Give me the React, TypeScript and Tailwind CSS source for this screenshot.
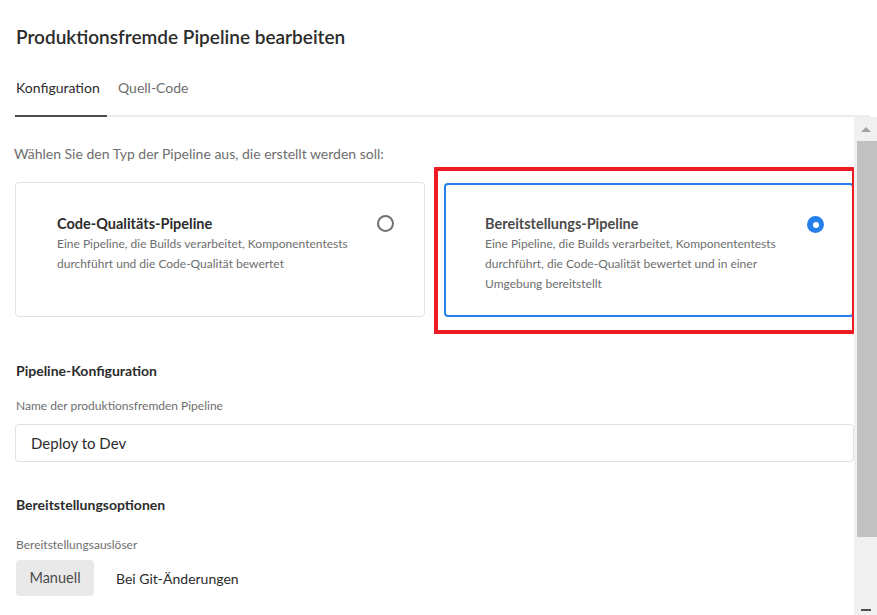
import React from "react";

const font = { fontFamily: "Lato, 'Noto Sans', sans-serif" };

function Radio({ checked }: { checked?: boolean }) {
  if (checked) {
    return (
      <div className="w-[17px] h-[17px] rounded-full bg-[#2680eb] flex items-center justify-center shrink-0">
        <div className="w-[6px] h-[6px] rounded-full bg-white" />
      </div>
    );
  }
  return <div className="w-[17px] h-[17px] rounded-full border-2 border-[#707070] bg-white shrink-0" />;
}

export default function App() {
  return (
    <div className="w-[877px] h-[615px] overflow-hidden bg-white text-[#2c2c2c] flex flex-col" style={font}>
      <div className="h-[117px] shrink-0 flex flex-col">
        <div className="pl-[16px] pt-[26px] text-[19px] leading-[22px] font-semibold text-[#2c2c2c]">
          Produktionsfremde Pipeline bearbeiten
        </div>
        <div className="mt-[17px] flex items-end pl-[15px] pr-[7px] h-[52px]">
          <div className="flex flex-1 border-b-2 border-[#ececec] h-full">
            <div className="border-b-2 border-[#4b4b4b] -mb-[2px] w-[92px] pl-[1px] pt-[13px] text-[14px] leading-[20px] text-[#2c2c2c]">
              Konfiguration
            </div>
            <div className="pl-[11px] pt-[13px] text-[14px] leading-[20px] text-[#6e6e6e]">Quell-Code</div>
          </div>
        </div>
      </div>
      <div className="flex flex-1 min-h-0">
        <div className="flex-1 min-w-0 overflow-hidden pl-[15px] pr-0">
          <div className="pt-[27px] -ml-[1px] text-[14px] leading-[20px] text-[#6e6e6e]">
            Wählen Sie den Typ der Pipeline aus, die erstellt werden soll:
          </div>
          <div className="mt-[18px] grid grid-cols-2 gap-[19px]">
            <div className="h-[135px] rounded-[4px] border border-[#e1e1e1] flex pl-[41px] pr-[30px] pt-[31px]">
              <div className="flex-1">
                <div className="text-[14.5px] leading-[20px] font-bold text-[#2c2c2c]">Code-Qualitäts-Pipeline</div>
                <div className="text-[12px] leading-[20px] text-[#6e6e6e]">
                  Eine Pipeline, die Builds verarbeitet, Komponententests durchführt und die Code-Qualität bewertet
                </div>
              </div>
              <div className="pt-[1px]">
                <Radio />
              </div>
            </div>
            <div className="relative">
              <div className="h-[134px] mt-[1px] rounded-[4px] border-2 border-[#2680eb] flex pl-[39px] pr-[28px] pt-[29px]">
                <div className="flex-1">
                  <div className="text-[14.5px] leading-[20px] font-bold text-[#4b4b4b]">Bereitstellungs-Pipeline</div>
                  <div className="text-[12px] leading-[20px] text-[#6e6e6e] pr-[20px]">
                    Eine Pipeline, die Builds verarbeitet, Komponententests durchführt, die Code-Qualität bewertet und in einer Umgebung bereitstellt
                  </div>
                </div>
                <div className="pt-[2px]">
                  <Radio checked />
                </div>
              </div>
              <div className="absolute left-[-10px] top-[-15px] right-[-2px] bottom-[-17px] border-[4px] border-[#ed1c24] pointer-events-none" />
            </div>
          </div>
          <div className="mt-[44px] pl-[1px] text-[14px] leading-[20px] font-bold text-[#2c2c2c]">Pipeline-Konfiguration</div>
          <div className="mt-[17px] pl-[1px] text-[12px] leading-[16px] text-[#6e6e6e]">Name der produktionsfremden Pipeline</div>
          <div className="mt-[10px] h-[38px] rounded-[4px] border border-[#e1e1e1] flex items-center pl-[15px] text-[15px] text-[#2c2c2c]">
            Deploy to Dev
          </div>
          <div className="mt-[33px] pl-[1px] text-[14px] leading-[20px] font-bold text-[#2c2c2c]">Bereitstellungsoptionen</div>
          <div className="mt-[22px] pl-[1px] text-[12px] leading-[16px] text-[#6e6e6e]">Bereitstellungsauslöser</div>
          <div className="mt-[7px] flex items-center">
            <div className="h-[36px] w-[78px] rounded-[4px] bg-[#e9e9e9] flex items-center justify-center text-[14.5px] text-[#4b4b4b] ml-[1px]">
              Manuell
            </div>
            <div className="ml-[22px] text-[14px] text-[#2c2c2c]">Bei Git-Änderungen</div>
          </div>
        </div>
        <div className="w-[23px] shrink-0 bg-[#f0f0f0] flex flex-col items-center">
          <div className="h-[24px] flex items-center justify-center">
            <div className="w-0 h-0 border-l-[5px] border-r-[5px] border-b-[5px] border-l-transparent border-r-transparent border-b-[#a3a3a3]" />
          </div>
          <div className="w-[20px] h-[396px] bg-[#c1c1c1] ml-[2px]" />
          <div className="flex-1" />
          <div className="h-[10px] flex items-start justify-center">
            <div className="w-[10px] h-[2px] bg-[#505050] mt-[4px]" />
          </div>
        </div>
      </div>
    </div>
  );
}
